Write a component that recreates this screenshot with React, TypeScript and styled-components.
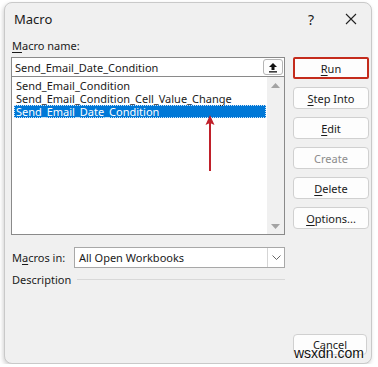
import React from "react";
import styled, { createGlobalStyle } from "styled-components";

const Global = createGlobalStyle`
  html, body { margin: 0; padding: 0; background: #ffffff; }
  body { font-family: "Noto Sans", "Open Sans", sans-serif; font-size: 11px; color: #1a1a1a; }
`;

const Dialog = styled.div`
  position: relative;
  box-sizing: border-box;
  margin: 2px 0 0 4px;
  width: 368px;
  height: 362px;
  background: #f0f0f0;
  border: 1px solid #c9c9c9;
  border-radius: 8px;
  box-shadow: -1px 2px 4px rgba(0,0,0,0.18);
  display: flex;
  flex-direction: column;
`;

const TitleBar = styled.div`
  height: 32px;
  display: flex;
  align-items: center;
  padding-left: 9px;
  font-size: 13px;
`;

const Title = styled.div`
  flex: 1;
`;

const TitleIcon = styled.div`
  width: 40px;
  display: flex;
  justify-content: center;
  align-items: center;
  font-size: 14px;
`;

const Content = styled.div`
  flex: 1;
  display: grid;
  grid-template-columns: 274px 76px;
  grid-template-rows: 22px 1fr;
  column-gap: 8px;
  padding: 0 0 8px 6px;
`;

const Label = styled.div`
  line-height: 16px;
  padding-left: 1px;
  padding-top: 3px;
`;

const U = styled.span`
  text-decoration: underline;
  text-underline-offset: 2px;
`;

const LeftStack = styled.div`
  display: flex;
  flex-direction: column;
`;

const NameInput = styled.div`
  box-sizing: border-box;
  height: 20px;
  background: #fff;
  border: 1px solid #8a8a8a;
  display: flex;
  align-items: center;
  padding-left: 3px;
  padding-right: 1px;
`;

const InputText = styled.div`
  flex: 1;
`;

const SmallBtn = styled.div`
  box-sizing: border-box;
  width: 20px;
  height: 16px;
  border: 1px solid #b5b5b5;
  border-radius: 3px;
  background: #fdfdfd;
  display: flex;
  align-items: center;
  justify-content: center;
`;

const ListBox = styled.div`
  box-sizing: border-box;
  height: 158px;
  background: #fff;
  border: 1px solid #8a8a8a;
  border-top: none;
  display: flex;
  position: relative;
`;

const Items = styled.div`
  flex: 1;
  padding: 2px 1px 0 2px;
`;

const Item = styled.div<{ $sel?: boolean }>`
  height: 13px;
  line-height: 13px;
  padding-left: 2px;
  white-space: nowrap;
  background: ${p => (p.$sel ? "#0078d7" : "transparent")};
  color: ${p => (p.$sel ? "#fff" : "#1a1a1a")};
  outline: ${p => (p.$sel ? "1px dotted #cfe3f7" : "none")};
  outline-offset: -1px;
`;

const ScrollBar = styled.div`
  width: 17px;
  background: #f0f0f0;
  display: flex;
  flex-direction: column;
  justify-content: space-between;
  align-items: center;
  padding: 6px 0 5px;
`;

const Arrow = styled.svg`
  position: absolute;
  left: 193px;
  top: 38px;
`;

const MacrosRow = styled.div`
  display: flex;
  align-items: center;
  margin-top: 12px;
  height: 21px;
`;

const RowLabel = styled.div`
  width: 62px;
  padding-left: 1px;
`;

const Select = styled.div`
  box-sizing: border-box;
  flex: 1;
  height: 21px;
  background: #fff;
  border: 1px solid #a8a8a8;
  display: flex;
  align-items: center;
`;

const SelectText = styled.div`
  flex: 1;
  padding-left: 4px;
`;

const SelectBtn = styled.div`
  width: 16px;
  height: 19px;
  border-left: 1px solid #d5d5d5;
  display: flex;
  align-items: center;
  justify-content: center;
`;

const DescRow = styled.div`
  display: flex;
  align-items: center;
  margin-top: 3px;
  height: 16px;
  padding-left: 1px;
`;

const DescLine = styled.div`
  flex: 1;
  height: 1px;
  background: #d8d8d8;
  margin-left: 6px;
`;

const Buttons = styled.div`
  display: flex;
  flex-direction: column;
  gap: 8px;
`;

const Btn = styled.div<{ $primary?: boolean; $disabled?: boolean }>`
  box-sizing: border-box;
  height: 22px;
  width: 76px;
  background: #fdfdfd;
  border: ${p => (p.$primary ? "2px solid #c42b1c" : "1px solid #d0d0d0")};
  border-radius: ${p => (p.$primary ? "2px" : "4px")};
  display: flex;
  align-items: center;
  justify-content: center;
  color: ${p => (p.$disabled ? "#8c8c8c" : "#1a1a1a")};
`;

const Footer = styled.div`
  position: absolute;
  right: 4px;
  bottom: 8px;
`;

const CancelBtn = styled(Btn)`
  height: 21px;
  width: 74px;
`;

const Watermark = styled.div`
  position: absolute;
  right: 7px;
  bottom: 2px;
  font-family: "Liberation Sans", Arial, sans-serif;
  font-size: 14px;
  color: #111;
  text-shadow: 0 0 2px #fff, 0 0 2px #fff;
`;

export default function App() {
  return (
    <>
      <Global />
      <Dialog>
        <TitleBar>
          <Title>Macro</Title>
          <TitleIcon>?</TitleIcon>
          <TitleIcon>
            <svg width="12" height="12" viewBox="0 0 12 12">
              <path d="M1 1 L11 11 M11 1 L1 11" stroke="#222" strokeWidth="1.1" />
            </svg>
          </TitleIcon>
        </TitleBar>
        <Content>
          <Label><U>M</U>acro name:</Label>
          <div />
          <LeftStack>
            <NameInput>
              <InputText>Send_Email_Date_Condition</InputText>
              <SmallBtn>
                <svg width="10" height="11" viewBox="0 0 10 11">
                  <path d="M5 1 L1 5 H3.5 V8 H6.5 V5 H9 Z" fill="#111" />
                  <rect x="1" y="9.2" width="8" height="1.3" fill="#111" />
                </svg>
              </SmallBtn>
            </NameInput>
            <ListBox>
              <Items>
                <Item>Send_Email_Condition</Item>
                <Item>Send_Email_Condition_Cell_Value_Change</Item>
                <Item $sel>Send_Email_Date_Condition</Item>
              </Items>
              <ScrollBar>
                <svg width="9" height="5" viewBox="0 0 9 5"><path d="M0 5 L4.5 0 L9 5 Z" fill="#a3a3a3" /></svg>
                <svg width="9" height="5" viewBox="0 0 9 5"><path d="M0 0 L4.5 5 L9 0 Z" fill="#a3a3a3" /></svg>
              </ScrollBar>
              <Arrow width="10" height="56" viewBox="0 0 10 56">
                <path d="M5 0 L9.5 10 L5 8 L0.5 10 Z" fill="#c0202a" />
                <rect x="4" y="6" width="2" height="50" fill="#c0202a" />
              </Arrow>
            </ListBox>
            <MacrosRow>
              <RowLabel>M<U>a</U>cros in:</RowLabel>
              <Select>
                <SelectText>All Open Workbooks</SelectText>
                <SelectBtn>
                  <svg width="9" height="5" viewBox="0 0 9 5">
                    <path d="M0.5 0.5 L4.5 4.5 L8.5 0.5" stroke="#555" fill="none" strokeWidth="0.9" />
                  </svg>
                </SelectBtn>
              </Select>
            </MacrosRow>
            <DescRow>
              Description
              <DescLine />
            </DescRow>
          </LeftStack>
          <Buttons>
            <Btn $primary><span><U>R</U>un</span></Btn>
            <Btn><span><U>S</U>tep Into</span></Btn>
            <Btn><span><U>E</U>dit</span></Btn>
            <Btn $disabled>Create</Btn>
            <Btn><span><U>D</U>elete</span></Btn>
            <Btn><span><U>O</U>ptions...</span></Btn>
          </Buttons>
        </Content>
        <Footer>
          <CancelBtn>Cancel</CancelBtn>
        </Footer>
        <Watermark>wsxdn.com</Watermark>
      </Dialog>
    </>
  );
}
